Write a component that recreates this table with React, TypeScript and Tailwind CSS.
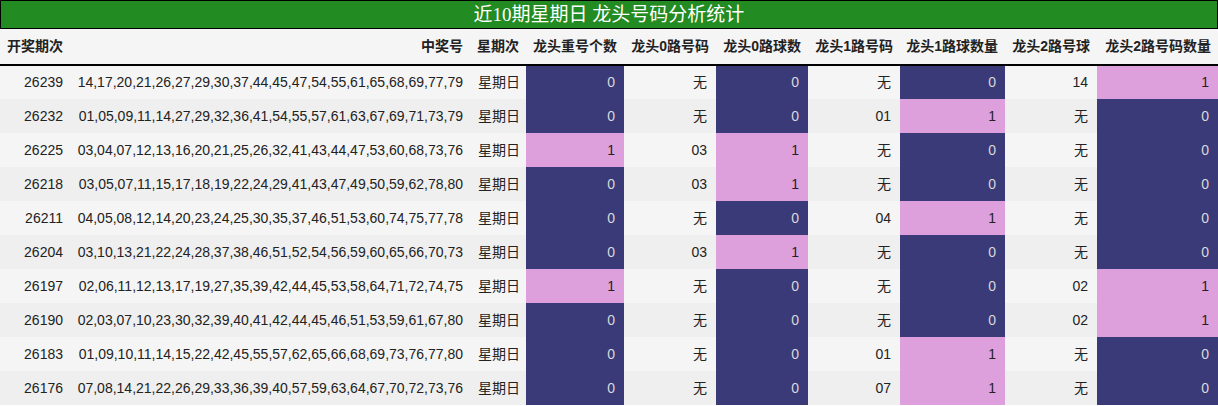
const rows: [string, string, number, string, number, string, number, string, number][] = [
  ["26239", "14,17,20,21,26,27,29,30,37,44,45,47,54,55,61,65,68,69,77,79", 0, "无", 0, "无", 0, "14", 1],
  ["26232", "01,05,09,11,14,27,29,32,36,41,54,55,57,61,63,67,69,71,73,79", 0, "无", 0, "01", 1, "无", 0],
  ["26225", "03,04,07,12,13,16,20,21,25,26,32,41,43,44,47,53,60,68,73,76", 1, "03", 1, "无", 0, "无", 0],
  ["26218", "03,05,07,11,15,17,18,19,22,24,29,41,43,47,49,50,59,62,78,80", 0, "03", 1, "无", 0, "无", 0],
  ["26211", "04,05,08,12,14,20,23,24,25,30,35,37,46,51,53,60,74,75,77,78", 0, "无", 0, "04", 1, "无", 0],
  ["26204", "03,10,13,21,22,24,28,37,38,46,51,52,54,56,59,60,65,66,70,73", 0, "03", 1, "无", 0, "无", 0],
  ["26197", "02,06,11,12,13,17,19,27,35,39,42,44,45,53,58,64,71,72,74,75", 1, "无", 0, "无", 0, "02", 1],
  ["26190", "02,03,07,10,23,30,32,39,40,41,42,44,45,46,51,53,59,61,67,80", 0, "无", 0, "无", 0, "02", 1],
  ["26183", "01,09,10,11,14,15,22,42,45,55,57,62,65,66,68,69,73,76,77,80", 0, "无", 0, "01", 1, "无", 0],
  ["26176", "07,08,14,21,22,26,29,33,36,39,40,57,59,63,64,67,70,72,73,76", 0, "无", 0, "07", 1, "无", 0],
];

const headers = [
  "开奖期次",
  "中奖号",
  "星期次",
  "龙头重号个数",
  "龙头0路号码",
  "龙头0路球数",
  "龙头1路号码",
  "龙头1路球数量",
  "龙头2路号球",
  "龙头2路号码数量",
];

const widths = [70, 400, 56, 98, 92, 92, 92, 105, 92, 121];

// count cell: 1 → plum, 0 → dark blue
const CountCell = ({ n }: { n: number }) => (
  <td
    className={
      n === 1
        ? "bg-[#dda0dd] text-[#222] text-right pr-[9px]"
        : "bg-[#3a3a78] text-[#d8d8d8] text-right pr-[9px]"
    }
  >
    {n}
  </td>
);

const App = () => {
  return (
    <div className="w-[1218px] h-[406px] overflow-hidden bg-white font-['Liberation_Sans','Noto_Sans_CJK_SC',sans-serif] text-[14px] text-[#222]">
      <div className="h-[29px] border border-black bg-[#228b22] flex items-center justify-center text-white text-[19px] leading-none font-['Liberation_Serif','Noto_Sans_CJK_SC',serif]">
        近10期星期日 龙头号码分析统计
      </div>
      <table className="table-fixed border-collapse w-[1218px]">
        <colgroup>
          {widths.map((w, i) => (
            <col key={i} style={{ width: w }} />
          ))}
        </colgroup>
        <thead>
          <tr className="h-[36px] bg-[#f5f5f5] border-b-2 border-black">
            {headers.map((h) => (
              <th key={h} className="text-right font-bold pr-[7px] whitespace-nowrap">
                {h}
              </th>
            ))}
          </tr>
        </thead>
        <tbody>
          {rows.map((r, i) => (
            <tr key={r[0]} className={i % 2 === 0 ? "h-[34px] bg-[#f5f5f5]" : "h-[34px] bg-[#efefef]"}>
              <td className="text-right pr-[7px]">{r[0]}</td>
              <td className="text-right pr-[7px] whitespace-nowrap">{r[1]}</td>
              <td className="text-right pr-[6px]">星期日</td>
              <CountCell n={r[2]} />
              <td className="text-right pr-[9px]">{r[3]}</td>
              <CountCell n={r[4]} />
              <td className="text-right pr-[9px]">{r[5]}</td>
              <CountCell n={r[6]} />
              <td className="text-right pr-[9px]">{r[7]}</td>
              <CountCell n={r[8]} />
            </tr>
          ))}
        </tbody>
      </table>
    </div>
  );
};

export default App;
